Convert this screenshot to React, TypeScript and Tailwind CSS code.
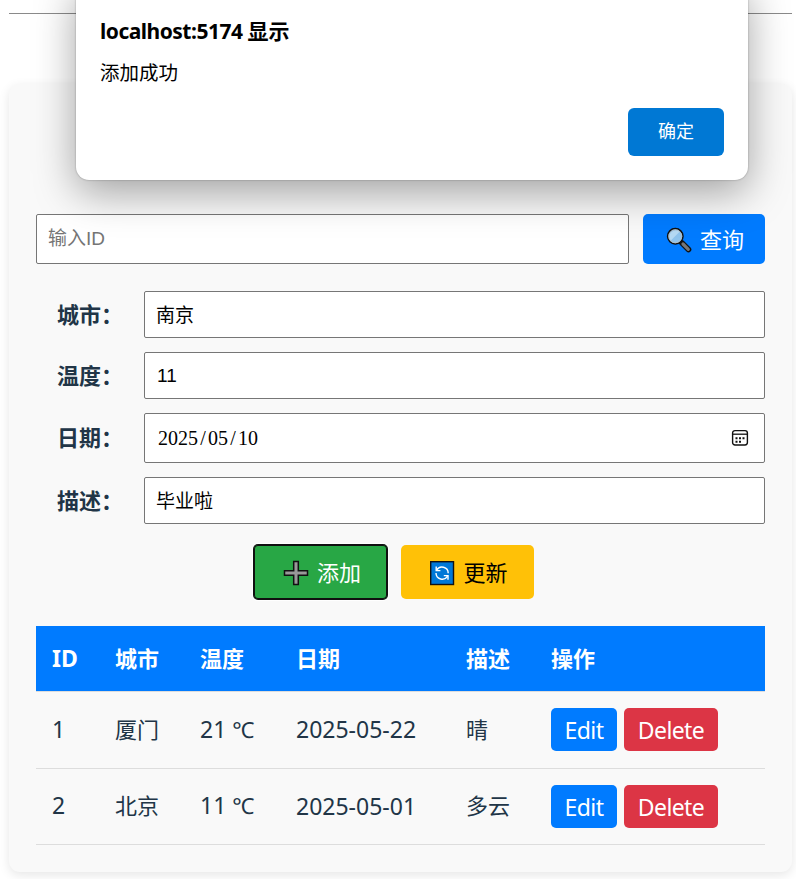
import type { ReactNode } from "react";

type Weather = {
  id: number;
  city: string;
  temp: number;
  date: string;
  desc: string;
};

const rows: Weather[] = [
  { id: 1, city: "厦门", temp: 21, date: "2025-05-22", desc: "晴" },
  { id: 2, city: "北京", temp: 11, date: "2025-05-01", desc: "多云" },
];

function SearchIcon() {
  return (
    <svg width="26" height="26" viewBox="0 0 26 26" fill="none">
      <path d="M16 16 L22.5 22.5" stroke="#111" strokeWidth="5.6" strokeLinecap="round" />
      <path d="M17 17 L22.3 22.3" stroke="#777" strokeWidth="3.2" strokeLinecap="round" />
      <circle cx="9.3" cy="9.3" r="7.7" fill="#8fc3ec" stroke="#111" strokeWidth="1.5" />
      <path d="M4.6 13.8 A6.6 6.6 0 0 1 13.8 4.6 Z" fill="#b5d9f3" />
      <circle cx="9.3" cy="9.3" r="6.5" stroke="#b9bcbf" strokeWidth=".8" />
    </svg>
  );
}

function PlusIcon() {
  return (
    <svg width="26" height="26" viewBox="0 0 26 26">
      <path
        d="M10.7 1.5h4.6v9.2h9.2v4.6h-9.2v9.2h-4.6v-9.2H1.5v-4.6h9.2z"
        fill="#999"
        stroke="#111"
        strokeWidth="1.5"
      />
    </svg>
  );
}

function RefreshIcon() {
  return (
    <svg width="26" height="26" viewBox="0 0 26 26" fill="none">
      <rect x="1.7" y="1.7" width="22.8" height="22.8" fill="#0078d7" stroke="#111" strokeWidth="1.4" />
      <g stroke="#fff" strokeWidth="1.4">
        <path d="M7.6 10.2 A6.2 6.2 0 0 1 19.2 13.2" />
        <path d="M18.6 16 A6.2 6.2 0 0 1 7 13" />
        <path d="M7.2 6.4v4.2h4.2M19 19.8v-4.2h-4.2" />
      </g>
    </svg>
  );
}

function CalendarIcon() {
  return (
    <svg width="18" height="18" viewBox="0 0 18 18" fill="none">
      <rect x="1.6" y="1.6" width="14.8" height="14.4" rx="2.4" stroke="#111" strokeWidth="1.4" />
      <path d="M1.6 5.2h14.8" stroke="#111" strokeWidth="1.3" />
      <path
        d="M4.5 8.3h2v2h-2zM8 8.3h2v2h-2zM11.5 8.3h2v2h-2zM4.5 11.7h2v2h-2zM8 11.7h2v2h-2z"
        fill="#111"
      />
    </svg>
  );
}

function Field({ label, tall, children }: { label: string; tall?: boolean; children: ReactNode }) {
  return (
    <div className="flex items-center">
      <label className="w-[108px] pb-[2px] pl-[21px] text-[22px] leading-none font-bold">{label}</label>
      <div
        className={
          tall
            ? "flex h-[50px] flex-1 items-center justify-between rounded-[2px] border border-[#767676] bg-white px-3 text-black"
            : "flex h-[47px] flex-1 items-center rounded-[2px] border border-[#767676] bg-white px-[11px] pt-[2px] text-[19px] text-black"
        }
      >
        {children}
      </div>
    </div>
  );
}

function DateText({ value }: { value: string }) {
  return (
    <span className="flex pl-px font-['Liberation_Serif','Noto_Sans_CJK_SC',serif] text-[20px] leading-none">
      {value.split("").map((c, i) => (
        <span key={i} className="w-[10px] text-center">
          {c}
        </span>
      ))}
    </span>
  );
}

function Alert() {
  return (
    <div className="absolute top-[-20px] left-[76px] h-[200px] w-[672px] rounded-[13px] bg-white text-black shadow-[0_0_2px_rgba(0,0,0,0.35),0_12px_42px_rgba(0,0,0,0.36)]">
      <div className="flex h-full flex-col px-6 pt-[39px] pb-6">
        <div className="text-[21px] leading-6 font-bold">
          <span className="tracking-[-0.5px]">localhost:5174 </span>显示
        </div>
        <div className="mt-[18px] text-[19.5px] leading-6">添加成功</div>
        <button className="mt-auto h-12 w-24 self-end rounded-[6px] bg-[#0078d4] pb-[2px] text-[18px] text-white">
          确定
        </button>
      </div>
    </div>
  );
}

export default function App() {
  return (
    <div className="relative h-[879px] overflow-hidden bg-white px-[9px] pt-[13px] font-['Noto_Sans','Noto_Sans_CJK_SC',sans-serif] text-[#213547]">
      <hr className="mr-[-5px] border-0 border-t border-[#8a8a8a]" />
      <main className="mt-[70px] mr-[-5px] h-[788px] rounded-[11px] bg-[#f9f9f9] px-[27px] pt-[130px] shadow-[0_3px_11px_rgba(0,0,0,0.1)]">
        <div className="flex h-[50px] gap-[14px]">
          <div className="flex w-[593px] items-center rounded-[2px] border border-[#767676] bg-white px-[11px] font-['Liberation_Sans','Noto_Sans_CJK_SC',sans-serif] text-[19px] text-[#757575]">
            输入ID
          </div>
          <button className="flex w-[122px] items-center justify-center gap-2 rounded-[5px] bg-[#007bff] pl-[2px] text-[22px] text-white">
            <span className="pt-[2px]">
              <SearchIcon />
            </span>
            查询
          </button>
        </div>

        <div className="mt-[27px] flex flex-col gap-[14px]">
          <Field label="城市：">南京</Field>
          <Field label="温度：">
            <span className="pl-px font-['Liberation_Sans',sans-serif] text-[19px]">11</span>
          </Field>
          <Field label="日期：" tall>
            <DateText value="2025/05/10" />
            <span className="mr-[3px]">
              <CalendarIcon />
            </span>
          </Field>
          <Field label="描述：">毕业啦</Field>
        </div>

        <div className="mt-[21px] flex h-[54px] gap-[14px] pl-[218px]">
          <button className="flex w-[133px] items-center justify-center gap-2 rounded-[4px] bg-[#28a745] pl-[3px] text-[22px] text-white shadow-[0_0_0_1px_#101010,0_0_0_2px_#fff,inset_0_0_0_1px_#101010]">
            <span className="pt-[2px]">
              <PlusIcon />
            </span>
            添加
          </button>
          <button className="flex w-[133px] items-center justify-center gap-2 rounded-[5px] bg-[#ffc107] pl-[2px] text-[22px] text-black">
            <span className="pt-[2px]">
              <RefreshIcon />
            </span>
            更新
          </button>
        </div>

        <table className="mt-[27px] w-[729px] table-fixed border-collapse text-left text-[22px] leading-none">
          <colgroup>
            <col className="w-[63px]" />
            <col className="w-[85px]" />
            <col className="w-[96px]" />
            <col className="w-[170px]" />
            <col className="w-[85px]" />
            <col className="w-[230px]" />
          </colgroup>
          <thead>
            <tr className="h-[65px] bg-[#007bff] text-white">
              {["ID", "城市", "温度", "日期", "描述", "操作"].map((h) => (
                <th key={h} className="p-0 pl-4 font-bold first:text-[23px]">
                  {h}
                </th>
              ))}
            </tr>
          </thead>
          <tbody>
            {rows.map((r) => (
              <tr key={r.id} className="h-[77px] border-t border-b border-[#ddd] last:h-[76px]">
                <td className="p-0 pb-px pl-4 text-[23px]">{r.id}</td>
                <td className="p-0 pb-[2px] pl-4">{r.city}</td>
                <td className="p-0 pb-px pl-4 text-[23px]">
                  {r.temp} <span className="text-[22px]">℃</span>
                </td>
                <td className="p-0 pl-4 text-[23px]">{r.date}</td>
                <td className="p-0 pb-[2px] pl-4">{r.desc}</td>
                <td className="p-0 pl-4">
                  <div className="flex gap-[7px] text-[23px] text-white">
                    <button className="h-[43px] w-[66px] rounded-[5px] bg-[#007bff] pt-[2px] tracking-[-0.5px]">
                      Edit
                    </button>
                    <button className="h-[43px] w-[94px] rounded-[5px] bg-[#dc3545] pt-[2px] tracking-[-0.6px]">
                      Delete
                    </button>
                  </div>
                </td>
              </tr>
            ))}
          </tbody>
        </table>
      </main>
      <Alert />
    </div>
  );
}
